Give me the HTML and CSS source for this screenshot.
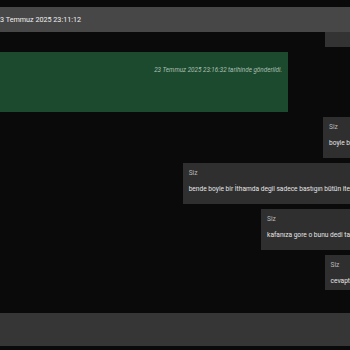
FILE: index.html
```html
<!DOCTYPE html>
<html lang="tr">
<head>
  <meta charset="UTF-8" />
  <meta name="viewport" content="width=device-width, initial-scale=1.0"/>
  <title>Sohbet</title>
  <link rel="stylesheet" href="styles.css">
</head>
<body>
  <div class="page">
    <header class="topbar">23 Temmuz 2025 23:11:12</header>

    <div class="chat">
      <div class="bubble tail"></div>

      <div class="notice">
        <span class="sent-at">23 Temmuz 2025 23:16:32 tarihinde gönderildi.</span>
      </div>

      <div class="bubble">
        <div class="who">Siz</div>
        <div class="text">boyle b</div>
      </div>

      <div class="bubble">
        <div class="who">Siz</div>
        <div class="text">bende boyle bir İthamda degil sadece bastıgın bütün ite</div>
      </div>

      <div class="bubble">
        <div class="who">Siz</div>
        <div class="text">kafanıza gore o bunu dedi ta</div>
      </div>

      <div class="bubble short">
        <div class="who">Siz</div>
        <div class="text">cevapt</div>
      </div>
    </div>

    <footer class="inputbar"></footer>
  </div>
</body>
</html>
```

FILE: styles.css
```css
* {
  margin: 0;
  padding: 0;
  box-sizing: border-box;
}

body {
  background: #0a0a0a;
  font-family: Roboto, 'Liberation Sans', sans-serif;
  color: #e2e2e2;
  overflow: hidden;
  height: 350px;
}

.page {
  width: 364px;
  margin-left: -14px;
  padding-top: 7px;
}

.topbar {
  background: #474747;
  height: 25px;
  padding: 0 10px;
  display: flex;
  align-items: center;
  font-size: 7.2px;
  color: #f0f0f0;
}

.chat {
  display: flex;
  flex-direction: column;
  align-items: flex-end;
  gap: 5px;
  height: 281px;
}

.bubble {
  background: #2f2f2f;
  padding: 6px 0 9px 6px;
}

.bubble.tail {
  height: 15px;
  width: 25px;
  background: #333;
}

.notice {
  align-self: flex-start;
  width: 302px;
  height: 60px;
  background: #1c4a2e;
  padding: 5px 6px;
  text-align: right;
}

.sent-at {
  font-size: 6.3px;
  font-style: italic;
  color: #a9bfb0;
}

.who {
  font-size: 6.6px;
  line-height: 9px;
  color: #b9b9b9;
  margin-bottom: 6px;
}

.text {
  font-size: 6.6px;
  line-height: 11px;
  color: #e6e6e6;
  white-space: nowrap;
}

.bubble.short {
  padding-bottom: 3px;
}

.inputbar {
  background: #363636;
  height: 33px;
}
```
